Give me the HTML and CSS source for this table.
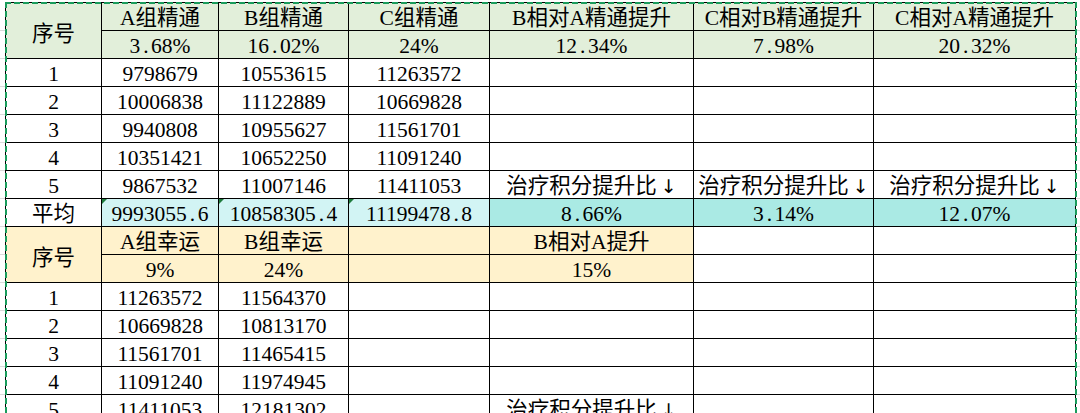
FILE: index.html
```html
<!DOCTYPE html>
<html lang="zh-CN">
<head>
<meta charset="utf-8">
<title>精通 / 幸运 对比</title>
<link rel="stylesheet" href="styles.css">
</head>
<body>
<div class="sheet">
  <div class="grid">
    <div class="c g span2">序号</div>
    <div class="c g">A组精通</div>
    <div class="c g">B组精通</div>
    <div class="c g">C组精通</div>
    <div class="c g">B相对A精通提升</div>
    <div class="c g">C相对B精通提升</div>
    <div class="c g">C相对A精通提升</div>
    <div class="c g">3<span class="p">.</span>68%</div>
    <div class="c g">16<span class="p">.</span>02%</div>
    <div class="c g">24%</div>
    <div class="c g">12<span class="p">.</span>34%</div>
    <div class="c g">7<span class="p">.</span>98%</div>
    <div class="c g">20<span class="p">.</span>32%</div>

    <div class="c">1</div><div class="c">9798679</div><div class="c">10553615</div><div class="c">11263572</div><div class="c"></div><div class="c"></div><div class="c"></div>
    <div class="c">2</div><div class="c">10006838</div><div class="c">11122889</div><div class="c">10669828</div><div class="c"></div><div class="c"></div><div class="c"></div>
    <div class="c">3</div><div class="c">9940808</div><div class="c">10955627</div><div class="c">11561701</div><div class="c"></div><div class="c"></div><div class="c"></div>
    <div class="c">4</div><div class="c">10351421</div><div class="c">10652250</div><div class="c">11091240</div><div class="c"></div><div class="c"></div><div class="c"></div>
    <div class="c">5</div><div class="c">9867532</div><div class="c">11007146</div><div class="c">11411053</div>
    <div class="c">治疗积分提升比<span class="arr">↓</span></div>
    <div class="c">治疗积分提升比<span class="arr">↓</span></div>
    <div class="c">治疗积分提升比<span class="arr">↓</span></div>

    <div class="c">平均</div>
    <div class="c cy tri">9993055<span class="p">.</span>6</div>
    <div class="c cy tri">10858305<span class="p">.</span>4</div>
    <div class="c cy tri">11199478<span class="p">.</span>8</div>
    <div class="c tl">8<span class="p">.</span>66%</div>
    <div class="c tl">3<span class="p">.</span>14%</div>
    <div class="c tl">12<span class="p">.</span>07%</div>

    <div class="c o span2">序号</div>
    <div class="c o">A组幸运</div>
    <div class="c o">B组幸运</div>
    <div class="c o"></div>
    <div class="c o">B相对A提升</div>
    <div class="c"></div>
    <div class="c"></div>
    <div class="c o">9%</div>
    <div class="c o">24%</div>
    <div class="c o"></div>
    <div class="c o">15%</div>
    <div class="c"></div>
    <div class="c"></div>

    <div class="c">1</div><div class="c">11263572</div><div class="c">11564370</div><div class="c"></div><div class="c"></div><div class="c"></div><div class="c"></div>
    <div class="c">2</div><div class="c">10669828</div><div class="c">10813170</div><div class="c"></div><div class="c"></div><div class="c"></div><div class="c"></div>
    <div class="c">3</div><div class="c">11561701</div><div class="c">11465415</div><div class="c"></div><div class="c"></div><div class="c"></div><div class="c"></div>
    <div class="c">4</div><div class="c">11091240</div><div class="c">11974945</div><div class="c"></div><div class="c"></div><div class="c"></div><div class="c"></div>
    <div class="c">5</div><div class="c">11411053</div><div class="c">12181302</div><div class="c"></div>
    <div class="c">治疗积分提升比<span class="arr">↓</span></div>
    <div class="c"></div><div class="c"></div>
  </div>
  <div class="marquee"></div>
</div>
</body>
</html>
```

FILE: styles.css
```css
html, body {
  margin: 0;
  padding: 0;
  overflow: hidden;
  height: 100%;
}
body {
  background-color: #fff;
  background-image: repeating-linear-gradient(to bottom, transparent 0 27px, #dadada 27px 28px);
  background-position: 0 3px;
  font-family: "Liberation Serif", "Noto Sans CJK SC", serif;
  font-size: 21.5px;
  color: #000;
}
.sheet {
  position: relative;
  margin: 2px 0 0 5px;
  width: max-content;
}
.grid {
  display: grid;
  grid-template-columns: 95px 116px 129px 140px 203px 179px 201px;
  grid-auto-rows: 27px;
  gap: 1px;
  padding: 1px;
  background: #000;
}
.c {
  background: #fff;
  text-align: center;
  white-space: nowrap;
  line-height: 31px;
  position: relative;
}
.span2 {
  grid-row: span 2;
  line-height: 62px;
}
.g { background: #e2efda; }
.o { background: #fff2cc; }
.cy { background: #d2f4f4; }
.tl { background: #aaeae4; }
.tri::before {
  content: "";
  position: absolute;
  top: 0;
  left: 0;
  border-top: 5px solid #1e7b3c;
  border-right: 5px solid transparent;
}
.p {
  padding: 0 2.5px 0 3px;
}
.arr {
  font-family: "DejaVu Sans", sans-serif;
  font-size: 19px;
  margin-left: 4px;
}
.marquee {
  position: absolute;
  left: 0;
  top: 0;
  width: 1072px;
  height: 440px;
  pointer-events: none;
  background-image:
    repeating-linear-gradient(90deg, #1a9c5c 0 6px, transparent 6px 9px),
    repeating-linear-gradient(180deg, #1a9c5c 0 6px, transparent 6px 9px),
    repeating-linear-gradient(180deg, #1a9c5c 0 6px, transparent 6px 9px);
  background-size: 100% 2px, 2px 100%, 2px 100%;
  background-position: 0 0, 0 0, 100% 0;
  background-repeat: no-repeat;
}
```
